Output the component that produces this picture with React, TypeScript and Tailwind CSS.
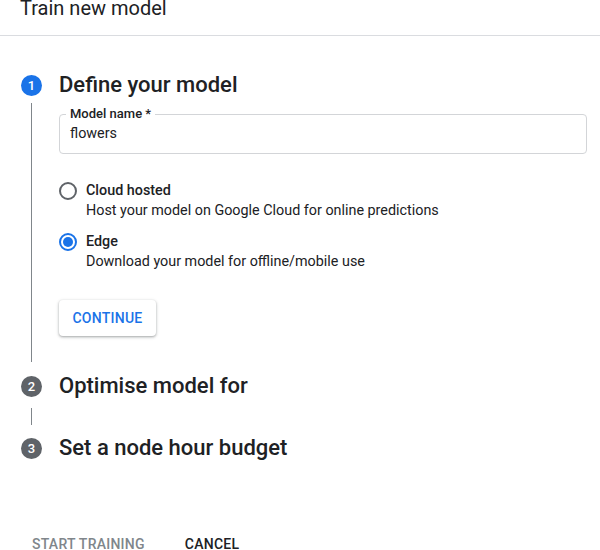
import React from "react";

function StepBadge({ n, active }: { n: number; active?: boolean }) {
  return (
    <div
      className={
        active
          ? "flex h-[21px] w-[21px] shrink-0 items-center justify-center rounded-full bg-[#1a73e8] text-[13px] font-medium leading-none text-white"
          : "flex h-[21px] w-[21px] shrink-0 items-center justify-center rounded-full bg-[#5f6368] text-[13px] font-medium leading-none text-white"
      }
    >
      {n}
    </div>
  );
}

function StepHeader({ n, title, active }: { n: number; title: string; active?: boolean }) {
  return (
    <div className="flex h-[24px] items-center pl-[21px]">
      <StepBadge n={n} active={active} />
      <h2 className="ml-[17px] text-[22px] font-medium leading-[24px] text-[#202124]">{title}</h2>
    </div>
  );
}

function Radio({ checked }: { checked?: boolean }) {
  return (
    <div
      className={
        checked
          ? "flex h-[18px] w-[18px] items-center justify-center rounded-full border-2 border-[#1a73e8]"
          : "flex h-[18px] w-[18px] items-center justify-center rounded-full border-2 border-[#5f6368]"
      }
    >
      {checked && <div className="h-[10px] w-[10px] rounded-full bg-[#1a73e8]" />}
    </div>
  );
}

function Option({ label, desc, checked }: { label: string; desc: string; checked?: boolean }) {
  return (
    <div className="flex">
      <div className="flex h-[21px] items-center">
        <Radio checked={checked} />
      </div>
      <div className="ml-[9px] text-[14.35px] text-[#202124]">
        <div className="font-medium leading-[21px]">{label}</div>
        <div className="leading-[20px]">{desc}</div>
      </div>
    </div>
  );
}

export default function App() {
  return (
    <div className="h-[550px] w-[600px] overflow-hidden bg-white font-['Roboto',sans-serif] text-[#202124]">
      <header className="h-[36px] border-b border-[#dadce0] pl-[20px]">
        <h1 className="text-[20px] font-normal leading-[16px]">Train new model</h1>
      </header>

      <div className="pt-[37px]">
        <StepHeader n={1} title="Define your model" active />

        <div className="mb-[12px] ml-[31px] mt-[6px] border-l border-[#80868b] pb-[26px] pl-[27px] pr-[13px] pt-[11px]">
          <div className="relative flex h-[40px] items-center rounded-[4px] border border-[#d3d5d8] px-[10px]">
            <span className="absolute -top-[9px] left-[6px] bg-white px-[4px] text-[13px] font-medium leading-[16px]">
              Model name *
            </span>
            <span className="text-[14.35px] leading-[20px]">flowers</span>
          </div>

          <div className="mt-[26px] flex flex-col gap-[10px]">
            <Option label="Cloud hosted" desc="Host your model on Google Cloud for online predictions" />
            <Option label="Edge" desc="Download your model for offline/mobile use" checked />
          </div>

          <button
            type="button"
            className="mt-[28px] flex h-[36px] w-[97px] items-center justify-center rounded-[4px] bg-white text-[14px] font-medium tracking-[0.25px] text-[#1a73e8] shadow-[0_1px_2px_0_rgba(60,64,67,0.3),0_1px_3px_1px_rgba(60,64,67,0.15)]"
          >
            CONTINUE
          </button>
        </div>

        <StepHeader n={2} title="Optimise model for" />
        <div className="mb-[11px] ml-[31px] mt-[10px] h-[17px] border-l border-[#80868b]" />
        <StepHeader n={3} title="Set a node hour budget" />
      </div>

      <footer className="mt-[66px] flex gap-[24px] pl-[24px]">
        <button type="button" className="h-[36px] px-[8px] text-[14px] font-medium leading-[20px] tracking-[0.25px] text-[#80868b]">
          START TRAINING
        </button>
        <button type="button" className="h-[36px] px-[8px] text-[14px] font-medium leading-[20px] tracking-[0.25px] text-[#202124]">
          CANCEL
        </button>
      </footer>
    </div>
  );
}
